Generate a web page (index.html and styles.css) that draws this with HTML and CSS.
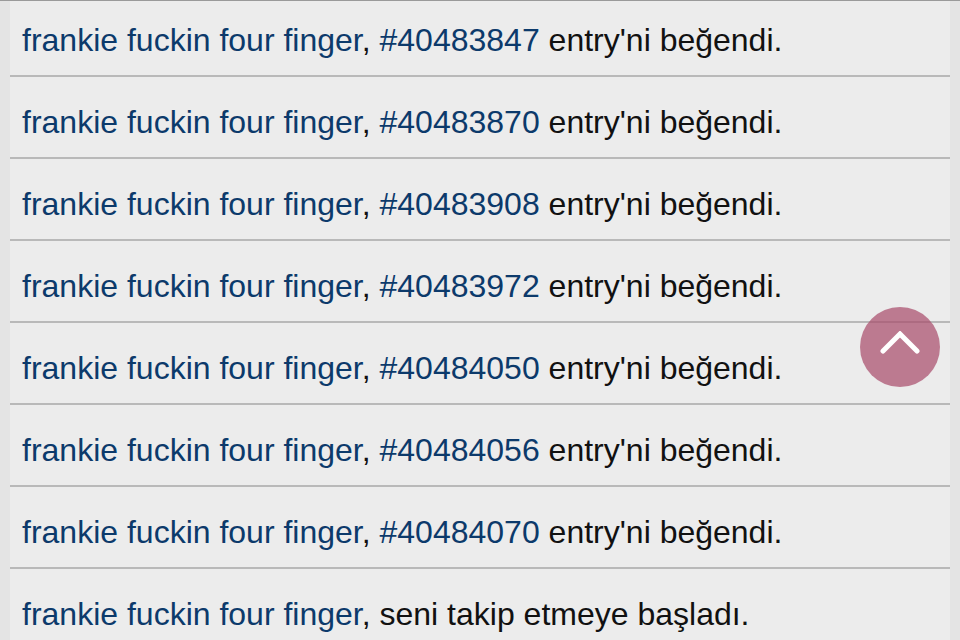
FILE: index.html
```html
<!DOCTYPE html>
<html lang="tr">
<head>
  <meta charset="UTF-8" />
  <meta name="viewport" content="width=device-width, initial-scale=1.0"/>
  <title>Bildirimler</title>
  <link rel="stylesheet" href="styles.css">
</head>
<body>
  <div class="feed">
    <ul class="events">
      <li class="event"><a href="#">frankie fuckin four finger</a>, <a href="#">#40483847</a> entry'ni beğendi.</li>
      <li class="event"><a href="#">frankie fuckin four finger</a>, <a href="#">#40483870</a> entry'ni beğendi.</li>
      <li class="event"><a href="#">frankie fuckin four finger</a>, <a href="#">#40483908</a> entry'ni beğendi.</li>
      <li class="event"><a href="#">frankie fuckin four finger</a>, <a href="#">#40483972</a> entry'ni beğendi.</li>
      <li class="event"><a href="#">frankie fuckin four finger</a>, <a href="#">#40484050</a> entry'ni beğendi.</li>
      <li class="event"><a href="#">frankie fuckin four finger</a>, <a href="#">#40484056</a> entry'ni beğendi.</li>
      <li class="event"><a href="#">frankie fuckin four finger</a>, <a href="#">#40484070</a> entry'ni beğendi.</li>
      <li class="event"><a href="#">frankie fuckin four finger</a>, seni takip etmeye başladı.</li>
    </ul>
  </div>

  <a class="to-top" href="#" title="yukarı">
    <svg width="40" height="24" viewBox="0 0 40 24">
      <polyline points="3,20 20,3 37,20" fill="none" stroke="#fff" stroke-width="5" stroke-linecap="round" stroke-linejoin="miter"/>
    </svg>
  </a>
</body>
</html>
```

FILE: styles.css
```css
html, body {
  margin: 0;
  padding: 0;
}

body {
  background-color: #e4e4e4;
  font-family: 'Liberation Sans', Arial, sans-serif;
  color: #111;
  height: 640px;
  overflow: hidden;
}

.feed {
  border-top: 1px solid #9a9a9a;
  overflow: hidden;
  height: 639px;
  padding: 0 10px;
}

.events {
  list-style: none;
  margin: -6px 0 0 0;
  padding: 0;
}

.event {
  background-color: #ececec;
  border-bottom: 2px solid #b9b9b9;
  font-size: 32px;
  line-height: 36px;
  padding: 27px 12px 17px;
  white-space: nowrap;
}

.event a {
  color: #0c3a6b;
  text-decoration: none;
}

.to-top {
  position: fixed;
  left: 860px;
  top: 307px;
  width: 80px;
  height: 80px;
  border-radius: 50%;
  background-color: rgba(168, 74, 106, 0.7);
  display: flex;
  align-items: center;
  justify-content: center;
}

.to-top svg {
  margin-top: -8px;
}
```
